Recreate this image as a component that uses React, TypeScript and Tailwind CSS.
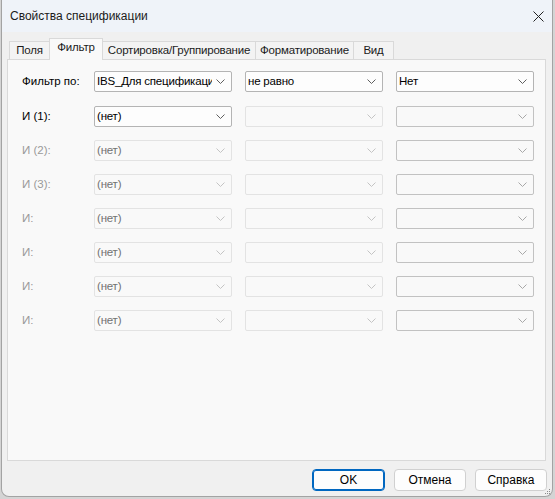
import React from "react";

type Combo = { text?: string; mode: "on" | "off" | "empty" };

// Шеврон справа в комбобоксе
const Chevron = ({ color }: { color: string }) => (
  <svg width="9" height="5" viewBox="0 0 9 5" fill="none" className="shrink-0">
    <path d="M0.5 0.5 L4.5 4.5 L8.5 0.5" stroke={color} strokeWidth="1" />
  </svg>
);

const ComboBox = ({ text, mode }: Combo) => {
  const box =
    mode === "on"
      ? "border-[#b4b4b4] bg-[#fdfdfd] text-black"
      : mode === "empty"
      ? "border-[#c2c2c2] bg-[#f9f9f9] text-black"
      : "border-[#e3e3e3] bg-[#f9f9f9] text-[#727272]";
  const chev = mode === "on" ? "#5f5f5f" : mode === "empty" ? "#a8a8a8" : "#c4c4c4";
  return (
    <div
      className={`w-[138px] h-[21px] border rounded-[2px] flex items-center pl-[2px] pr-[6px] ${box}`}
    >
      <span className="flex-1 mr-[4px] overflow-hidden whitespace-nowrap text-[11.5px] leading-none tracking-[-0.2px]">
        {text}
      </span>
      <Chevron color={chev} />
    </div>
  );
};

const rows: { label: string; on: boolean }[] = [
  { label: "И (1):", on: true },
  { label: "И (2):", on: false },
  { label: "И (3):", on: false },
  { label: "И:", on: false },
  { label: "И:", on: false },
  { label: "И:", on: false },
  { label: "И:", on: false },
];

const tabs = [
  { name: "Поля", w: "w-[41px]" },
  { name: "Фильтр", w: "w-[54px]", active: true },
  { name: "Сортировка/Группирование", w: "w-[154px]" },
  { name: "Форматирование", w: "w-[99px]" },
  { name: "Вид", w: "w-[41px]" },
];

export default function App() {
  return (
    <div
      className="w-[555px] h-[499px] bg-[#d4d4d4] overflow-hidden"
      style={{ fontFamily: '"Liberation Sans", Arial, sans-serif' }}
    >
      <div className="relative ml-[1px] w-[552px] h-[497px] bg-[#f0f0f0] border-x border-b border-[#a3a3a3] rounded-b-[8px] flex flex-col">
        {/* Заголовок окна */}
        <div className="h-[32px] bg-[#eff3f9] flex items-center justify-between pl-[8px] pr-[8px]">
          <span className="text-[12px] text-[#1b1b1b]">Свойства спецификации</span>
          <svg width="11" height="11" viewBox="0 0 11 11">
            <path d="M0.5 0.5 L10.5 10.5 M10.5 0.5 L0.5 10.5" stroke="#222" strokeWidth="1" />
          </svg>
        </div>

        {/* Вкладки */}
        <div className="mt-[7px] ml-[7px] h-[20px] flex items-end relative z-10">
          {tabs.map((t, i) => (
            <div
              key={t.name}
              className={`${t.w} ${i > 0 ? "-ml-px" : ""} border border-[#d9d9d9] border-b-0 flex items-center justify-center whitespace-nowrap text-[11.5px] tracking-[-0.2px] text-[#1b1b1b] ${
                t.active ? "h-[22px] -mb-px bg-[#f9f9f9] relative z-10 pb-[3px]" : "h-[18px] bg-[#f3f3f3] pt-[1px]"
              }`}
            >
              {t.name}
            </div>
          ))}
        </div>

        {/* Панель фильтра */}
        <div className="ml-[5px] w-[539px] h-[402px] border border-[#d9d9d9] bg-[#f9f9f9] pl-[14px] pt-[11px]">
          <div className="flex items-center h-[21px] mb-[14px]">
            <span className="w-[72px] text-[11.5px] text-black">Фильтр по:</span>
            <div className="flex gap-[13px]">
              <ComboBox text="IBS_Для спецификации" mode="on" />
              <ComboBox text="не равно" mode="on" />
              <ComboBox text="Нет" mode="on" />
            </div>
          </div>
          <div className="flex flex-col gap-[13px]">
            {rows.map((r, i) => (
              <div key={i} className="flex items-center h-[21px]">
                <span className={`w-[72px] text-[11.5px] ${r.on ? "text-black" : "text-[#9a9a9a]"}`}>{r.label}</span>
                <div className="flex gap-[13px]">
                  <ComboBox text="(нет)" mode={r.on ? "on" : "off"} />
                  <ComboBox mode="off" />
                  <ComboBox mode="empty" />
                </div>
              </div>
            ))}
          </div>
        </div>

        {/* Кнопки */}
        <div className="mt-[8px] pr-[5px] flex justify-end gap-[9px]">
          <button className="w-[73px] h-[22px] rounded-[4px] border border-[#0067c0] bg-[#fdfdfd] text-[12px] text-black shadow-[inset_0_0_0_1px_#0067c0]">
            OK
          </button>
          <button className="w-[72px] h-[22px] rounded-[4px] border border-[#d0d0d0] bg-[#fdfdfd] text-[12px] text-black">
            Отмена
          </button>
          <button className="w-[72px] h-[22px] rounded-[4px] border border-[#d0d0d0] bg-[#fdfdfd] text-[12px] text-black">
            Справка
          </button>
        </div>

        {/* Уголок изменения размера */}
        <svg width="6" height="6" viewBox="0 0 6 6" className="absolute right-[1px] bottom-[1px]">
          <rect x="4" y="0" width="1" height="1" fill="#8a8a8a" />
          <rect x="2" y="2" width="1" height="1" fill="#8a8a8a" />
          <rect x="4" y="2" width="1" height="1" fill="#8a8a8a" />
          <rect x="0" y="4" width="1" height="1" fill="#8a8a8a" />
          <rect x="2" y="4" width="1" height="1" fill="#8a8a8a" />
          <rect x="4" y="4" width="1" height="1" fill="#8a8a8a" />
        </svg>
      </div>
    </div>
  );
}
